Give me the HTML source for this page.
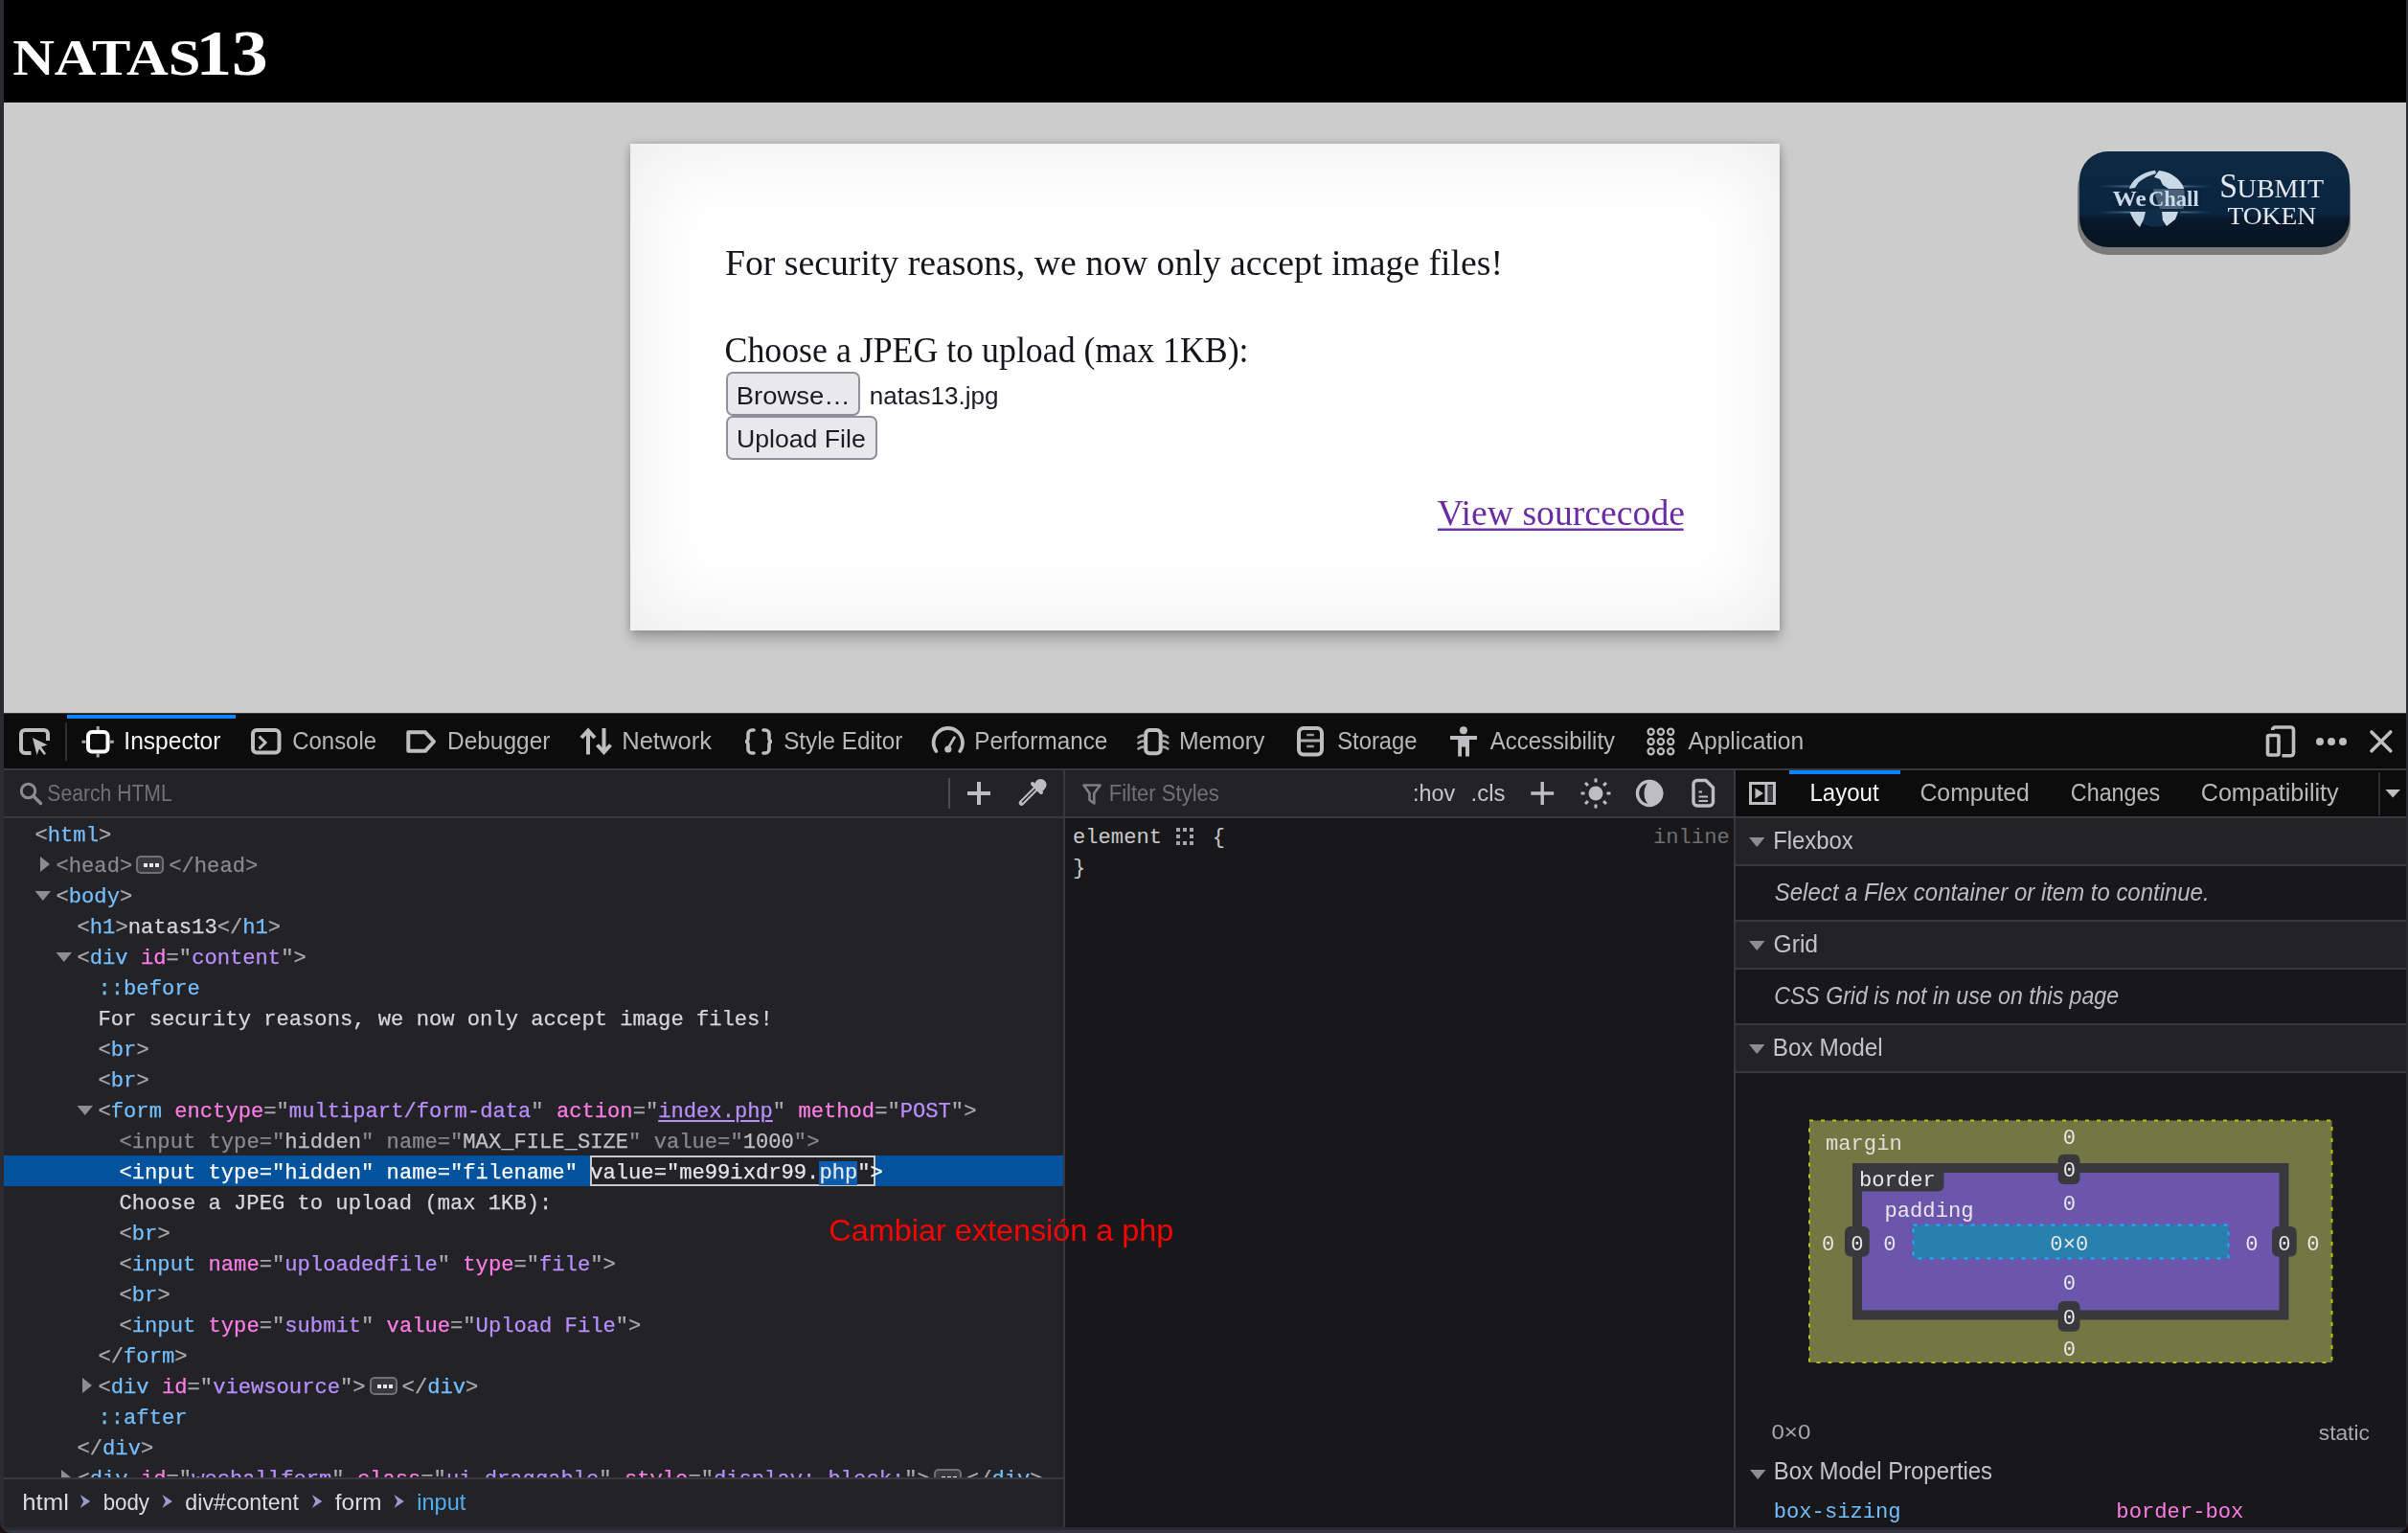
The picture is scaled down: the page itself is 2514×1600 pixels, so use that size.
<!DOCTYPE html>
<html><head><meta charset="utf-8"><style>
*{margin:0;padding:0;box-sizing:border-box}
html,body{width:2514px;height:1600px;overflow:hidden;background:#2b2c32}
body{position:relative;font-family:"Liberation Sans",sans-serif}
.a{position:absolute}
.mono{font-family:"Liberation Mono",monospace;white-space:pre}
.ln{background:#38383d}
.row{left:4px;height:32px;width:1106px;font-size:22.15px;line-height:32px;color:#d7d7db}
.b{color:#a9a9ac}.t{color:#75bfff}.n{color:#ff7de9}.v{color:#b98eff}.x{color:#d7d7db}
.dim .b,.dim .t,.dim .n{color:#8a8a8d}.dim .v,.dim .x{color:#c0c0c2}
.dimall span{color:#8a8a8d}
.sel{background:#00539c}
.sel span{color:#fff}
.bdg{display:inline-block;width:29px;height:19px;border:2px solid #707075;border-radius:5px;vertical-align:-2px;margin:0 5px 0 4px;background:#38383d;position:relative}.bdg:after{content:'';position:absolute;left:6px;top:5.5px;width:4px;height:4px;background:#e8e8ea;box-shadow:6px 0 0 #e8e8ea,12px 0 0 #e8e8ea}
.edit{}
.edit span{color:#e6e6e8}
.hl{background:#0b5cad;color:#fff}
svg text{white-space:pre}
svg,.tree{will-change:transform}
.row{-webkit-text-stroke:0.25px currentColor}
.row span{-webkit-text-stroke:0.25px currentColor}
</style></head><body>
<div class="a" style="left:4px;top:0;width:2508px;height:107px;background:#000"></div>
<div class="a" style="left:4px;top:107px;width:2508px;height:637px;background:#cccccc"></div>
<div class="a" style="left:658px;top:150px;width:1200px;height:508px;background:#fff;box-shadow:inset 0 0 90px rgba(0,0,0,.085), 0 0 8px rgba(0,0,0,.2), 1px 10px 12px rgba(0,0,0,.2)"></div>
<div class="a" style="left:758px;top:388px;width:140px;height:46px;background:#e9e9ed;border:2px solid #8f8f9d;border-radius:7px"></div>
<div class="a" style="left:758px;top:434px;width:158px;height:46px;background:#e9e9ed;border:2px solid #8f8f9d;border-radius:7px"></div>
<div class="a" style="left:2169px;top:165px;width:285px;height:101px;border-radius:32px;background:#7a7a7a"></div>
<div class="a" style="left:2171px;top:158px;width:282px;height:100px;border-radius:30px;background:linear-gradient(#0d2842 0%,#0a2540 66%,#08182a 70%,#071522 100%)"></div>
<div class="a" style="left:4px;top:744px;width:2508px;height:58px;background:#0c0c0d;border-top:1px solid #3a3a40"></div>
<div class="a" style="left:70px;top:746px;width:176px;height:4px;background:#0a84ff"></div>
<div class="a ln" style="left:4px;top:802px;width:2508px;height:2px"></div>
<div class="a" style="left:4px;top:804px;width:1106px;height:48px;background:#232327"></div>
<div class="a ln" style="left:4px;top:852px;width:2508px;height:2px"></div>
<div class="a" style="left:4px;top:854px;width:1106px;height:740px;background:#232327"></div>
<div class="a ln" style="left:4px;top:1542px;width:1106px;height:2px"></div>
<div class="a ln" style="left:1110px;top:804px;width:2px;height:790px"></div>
<div class="a ln" style="left:1810px;top:804px;width:2px;height:790px"></div>
<div class="a" style="left:1112px;top:804px;width:698px;height:48px;background:#232327"></div>
<div class="a" style="left:1112px;top:854px;width:698px;height:740px;background:#18181b"></div>
<div class="a" style="left:1812px;top:804px;width:700px;height:48px;background:#0c0c0d"></div>
<div class="a" style="left:1868px;top:804px;width:116px;height:4px;background:#0a84ff"></div>
<div class="a" style="left:1812px;top:854px;width:700px;height:740px;background:#18181b"></div>
<div class="a" style="left:1812px;top:854px;width:700px;height:48px;background:#232327"></div>
<div class="a ln" style="left:1812px;top:902px;width:700px;height:2px"></div>
<div class="a" style="left:1812px;top:962px;width:700px;height:48px;background:#232327"></div>
<div class="a ln" style="left:1812px;top:1010px;width:700px;height:2px"></div>
<div class="a" style="left:1812px;top:1070px;width:700px;height:48px;background:#232327"></div>
<div class="a ln" style="left:1812px;top:1118px;width:700px;height:2px"></div>
<div class="a ln" style="left:1812px;top:960px;width:700px;height:2px"></div>
<div class="a ln" style="left:1812px;top:1068px;width:700px;height:2px"></div>
<div class="a" style="left:0;top:1594px;width:2514px;height:3px;background:#252a36"></div>
<div class="a" style="left:0;top:1597px;width:2514px;height:3px;background:#34363f"></div>
<div class="a tree" style="left:0;top:0;width:1110px;height:1542px;overflow:hidden"><div class="a row mono " style="top:854px"><div class="a" style="left:32.5px;top:3px"><span class="b">&lt;</span><span class="t">html</span><span class="b">&gt;</span></div></div>
<div class="a row mono dimall" style="top:886px"><div class="a" style="left:54.5px;top:3px"><span class="b">&lt;</span><span class="t">head</span><span class="b">&gt;</span><span class="bdg"></span><span class="b">&lt;/</span><span class="t">head</span><span class="b">&gt;</span></div></div>
<div class="a row mono " style="top:918px"><div class="a" style="left:54.5px;top:3px"><span class="b">&lt;</span><span class="t">body</span><span class="b">&gt;</span></div></div>
<div class="a row mono " style="top:950px"><div class="a" style="left:76.5px;top:3px"><span class="b">&lt;</span><span class="t">h1</span><span class="b">&gt;</span><span class="x">natas13</span><span class="b">&lt;/</span><span class="t">h1</span><span class="b">&gt;</span></div></div>
<div class="a row mono " style="top:982px"><div class="a" style="left:76.5px;top:3px"><span class="b">&lt;</span><span class="t">div</span><span class="x"> </span><span class="n">id</span><span class="b">="</span><span class="v">content</span><span class="b">"</span><span class="b">&gt;</span></div></div>
<div class="a row mono " style="top:1014px"><div class="a" style="left:98.5px;top:3px"><span class="t">::before</span></div></div>
<div class="a row mono " style="top:1046px"><div class="a" style="left:98.5px;top:3px"><span class="x">For security reasons, we now only accept image files!</span></div></div>
<div class="a row mono " style="top:1078px"><div class="a" style="left:98.5px;top:3px"><span class="b">&lt;</span><span class="t">br</span><span class="b">&gt;</span></div></div>
<div class="a row mono " style="top:1110px"><div class="a" style="left:98.5px;top:3px"><span class="b">&lt;</span><span class="t">br</span><span class="b">&gt;</span></div></div>
<div class="a row mono " style="top:1142px"><div class="a" style="left:98.5px;top:3px"><span class="b">&lt;</span><span class="t">form</span><span class="x"> </span><span class="n">enctype</span><span class="b">="</span><span class="v">multipart/form-data</span><span class="b">"</span><span class="x"> </span><span class="n">action</span><span class="b">="</span><span class="v" style="text-decoration:underline;text-underline-offset:3px;text-decoration-thickness:2px">index.php</span><span class="b">"</span><span class="x"> </span><span class="n">method</span><span class="b">="</span><span class="v">POST</span><span class="b">"</span><span class="b">&gt;</span></div></div>
<div class="a row mono dim" style="top:1174px"><div class="a" style="left:120.5px;top:3px"><span class="b">&lt;</span><span class="t">input</span><span class="x"> </span><span class="n">type</span><span class="b">="</span><span class="v">hidden</span><span class="b">"</span><span class="x"> </span><span class="n">name</span><span class="b">="</span><span class="v">MAX_FILE_SIZE</span><span class="b">"</span><span class="x"> </span><span class="n">value</span><span class="b">="</span><span class="v">1000</span><span class="b">"</span><span class="b">&gt;</span></div></div>
<div class="a row mono sel" style="top:1206px"><div class="a" style="left:612px;top:0;width:298px;height:32px;background:#232327;border:2px solid #c8c8cc"></div><div class="a" style="left:120.5px;top:3px"><span class="b">&lt;</span><span class="t">input</span><span class="x"> </span><span class="n">type</span><span class="b">="</span><span class="v">hidden</span><span class="b">"</span><span class="x"> </span><span class="n">name</span><span class="b">="</span><span class="v">filename</span><span class="b">"</span><span class="x"> </span><span class="edit"><span class="x">value="me99ixdr99.</span><span class="hl">php</span><span class="x">"</span></span><span class="b">&gt;</span></div></div>
<div class="a row mono " style="top:1238px"><div class="a" style="left:120.5px;top:3px"><span class="x">Choose a JPEG to upload (max 1KB):</span></div></div>
<div class="a row mono " style="top:1270px"><div class="a" style="left:120.5px;top:3px"><span class="b">&lt;</span><span class="t">br</span><span class="b">&gt;</span></div></div>
<div class="a row mono " style="top:1302px"><div class="a" style="left:120.5px;top:3px"><span class="b">&lt;</span><span class="t">input</span><span class="x"> </span><span class="n">name</span><span class="b">="</span><span class="v">uploadedfile</span><span class="b">"</span><span class="x"> </span><span class="n">type</span><span class="b">="</span><span class="v">file</span><span class="b">"</span><span class="b">&gt;</span></div></div>
<div class="a row mono " style="top:1334px"><div class="a" style="left:120.5px;top:3px"><span class="b">&lt;</span><span class="t">br</span><span class="b">&gt;</span></div></div>
<div class="a row mono " style="top:1366px"><div class="a" style="left:120.5px;top:3px"><span class="b">&lt;</span><span class="t">input</span><span class="x"> </span><span class="n">type</span><span class="b">="</span><span class="v">submit</span><span class="b">"</span><span class="x"> </span><span class="n">value</span><span class="b">="</span><span class="v">Upload File</span><span class="b">"</span><span class="b">&gt;</span></div></div>
<div class="a row mono " style="top:1398px"><div class="a" style="left:98.5px;top:3px"><span class="b">&lt;/</span><span class="t">form</span><span class="b">&gt;</span></div></div>
<div class="a row mono " style="top:1430px"><div class="a" style="left:98.5px;top:3px"><span class="b">&lt;</span><span class="t">div</span><span class="x"> </span><span class="n">id</span><span class="b">="</span><span class="v">viewsource</span><span class="b">"</span><span class="b">&gt;</span><span class="bdg"></span><span class="b">&lt;/</span><span class="t">div</span><span class="b">&gt;</span></div></div>
<div class="a row mono " style="top:1462px"><div class="a" style="left:98.5px;top:3px"><span class="t">::after</span></div></div>
<div class="a row mono " style="top:1494px"><div class="a" style="left:76.5px;top:3px"><span class="b">&lt;/</span><span class="t">div</span><span class="b">&gt;</span></div></div>
<div class="a row mono " style="top:1526px"><div class="a" style="left:76.5px;top:3px"><span class="b">&lt;</span><span class="t">div</span><span class="x"> </span><span class="n">id</span><span class="b">="</span><span class="v">wechallform</span><span class="b">"</span><span class="x"> </span><span class="n">class</span><span class="b">="</span><span class="v">ui-draggable</span><span class="b">"</span><span class="x"> </span><span class="n">style</span><span class="b">="</span><span class="v">display: block;</span><span class="b">"</span><span class="b">&gt;</span><span class="bdg"></span><span class="b">&lt;/</span><span class="t">div</span><span class="b">&gt;</span></div></div></div>
<div class="a mono" style="left:1120px;top:859px;font-size:22.15px;line-height:32px;color:#c9c9cc">element <span style="display:inline-block;width:13px"></span>  {</div>
<div class="a mono" style="left:1120px;top:891px;font-size:22.15px;line-height:32px;color:#c9c9cc">}</div>
<div class="a mono" style="left:1726px;top:859px;font-size:22.15px;line-height:32px;color:#6f6f73">inline</div>
<svg class="a" style="left:0;top:0" width="2514" height="1600" viewBox="0 0 2514 1600"><defs><clipPath id="treeclip"><rect x="0" y="854" width="1110" height="688"/></clipPath></defs><path d="M42.0 894 v16 l10 -8 z" fill="#8d8d90" clip-path="url(#treeclip)"/><path d="M36.5 930 h16.5 l-8.25 10 z" fill="#8d8d90" clip-path="url(#treeclip)"/><path d="M58.5 994 h16.5 l-8.25 10 z" fill="#8d8d90" clip-path="url(#treeclip)"/><path d="M80.5 1154 h16.5 l-8.25 10 z" fill="#8d8d90" clip-path="url(#treeclip)"/><path d="M86.0 1438 v16 l10 -8 z" fill="#8d8d90" clip-path="url(#treeclip)"/><path d="M64.0 1534 v16 l10 -8 z" fill="#8d8d90" clip-path="url(#treeclip)"/><rect x="1228.0" y="864.0" width="4" height="4" fill="#a5a5a8"/><rect x="1235.0" y="864.0" width="4" height="4" fill="#a5a5a8"/><rect x="1242.0" y="864.0" width="4" height="4" fill="#a5a5a8"/><rect x="1228.0" y="871.0" width="4" height="4" fill="#a5a5a8"/><rect x="1242.0" y="871.0" width="4" height="4" fill="#a5a5a8"/><rect x="1228.0" y="878.0" width="4" height="4" fill="#a5a5a8"/><rect x="1235.0" y="878.0" width="4" height="4" fill="#a5a5a8"/><rect x="1242.0" y="878.0" width="4" height="4" fill="#a5a5a8"/><rect x="1889" y="1169.5" width="545.5" height="252.5" fill="#737744" stroke="#b8c400" stroke-width="2" stroke-dasharray="4 8"/><rect x="1939" y="1219" width="445.5" height="153.5" fill="#6b56ac" stroke="#38383d" stroke-width="10"/><path d="M1934 1214 H2029.5 V1237.5 a6 6 0 0 1 -6 6 H1934 Z" fill="#38383d"/><rect x="1997.5" y="1278.5" width="329" height="35" fill="#2880ac" stroke="#1aaeff" stroke-width="2" stroke-dasharray="4 8"/><rect x="2148.6" y="1204.8" width="22.9" height="31.2" rx="6" fill="#38383d"/><rect x="1926" y="1280" width="25.7" height="31.5" rx="6" fill="#38383d"/><rect x="2372" y="1280" width="25.7" height="31.5" rx="6" fill="#38383d"/><rect x="2148.6" y="1358" width="22.9" height="31.7" rx="6" fill="#38383d"/><path d="M32.5 786 H26 a4 4 0 0 1 -4 -4 V766 a4 4 0 0 1 4 -4 H46 a4 4 0 0 1 4 4 V773" fill="none" stroke="#bebec0" stroke-width="4"/><path d="M34 770 L49.5 777.5 L43 779.5 L48 786.5 L46 788 L41 781.5 L38.5 788 Z" fill="#bebec0"/><rect x="68" y="754" width="2" height="40" fill="#2e2e32"/><rect x="92" y="764" width="20.5" height="20.5" rx="4" fill="none" stroke="#fbfbfe" stroke-width="4"/><path d="M102.2 758 V762 M102.2 786.5 V790.5 M85.5 774.2 H89.5 M114.8 774.2 H118.8" stroke="#a9a9ad" stroke-width="3"/><rect x="264" y="762" width="27.5" height="23.5" rx="4" fill="none" stroke="#bebec0" stroke-width="4"/><path d="M270.5 768.5 L277 775 L270.5 781.5" fill="none" stroke="#bebec0" stroke-width="3"/><path d="M426.3 764.3 H444 L453 774 L444 783.8 H426.3 Z" fill="none" stroke="#bebec0" stroke-width="4" stroke-linejoin="round"/><path d="M614 787.5 V763 M607 770 L614 762.5 L621 770" fill="none" stroke="#bebec0" stroke-width="4"/><path d="M630.5 760 V784.5 M623.5 777.5 L630.5 785 L637.5 777.5" fill="none" stroke="#bebec0" stroke-width="4"/><path d="M787 762 h-2 a4 4 0 0 0 -4 4 v5 a3 3 0 0 1 -3 3 a3 3 0 0 1 3 3 v5 a4 4 0 0 0 4 4 h2" fill="none" stroke="#bebec0" stroke-width="3.6" stroke-linecap="round"/><path d="M797 762 h2 a4 4 0 0 1 4 4 v5 a3 3 0 0 0 3 3 a3 3 0 0 0 -3 3 v5 a4 4 0 0 1 -4 4 h-2" fill="none" stroke="#bebec0" stroke-width="3.6" stroke-linecap="round"/><path d="M977.4 784 A15.2 15.2 0 1 1 1002.2 784" fill="none" stroke="#bebec0" stroke-width="3.8" stroke-linecap="round"/><path d="M989.8 781 L996.5 769.5" stroke="#bebec0" stroke-width="2.6" stroke-linecap="round"/><circle cx="989.8" cy="782" r="3.6" fill="#bebec0"/><rect x="1196.2" y="762" width="15.5" height="24.2" rx="4" fill="none" stroke="#bebec0" stroke-width="4"/><path d="M1188.5 769.5 q2.5 -2 5.5 -2 M1188.5 775.5 q2.5 -2 5.5 -2 M1188.5 781.5 q2.5 -2 5.5 -2 M1219.3 769.5 q-2.5 -2 -5.5 -2 M1219.3 775.5 q-2.5 -2 -5.5 -2 M1219.3 781.5 q-2.5 -2 -5.5 -2" fill="none" stroke="#a8a8aa" stroke-width="2.6" stroke-linecap="round"/><rect x="1356" y="760" width="24" height="27.6" rx="5" fill="none" stroke="#bebec0" stroke-width="4"/><path d="M1358 773 H1378" stroke="#a8a8aa" stroke-width="3"/><path d="M1364.2 767 H1371.8 M1364.2 779 H1371.8" stroke="#9a9a9c" stroke-width="2.6"/><circle cx="1527.9" cy="762.2" r="4" fill="#bebec0"/><path d="M1514 768 H1542 V772 H1534 V789.6 H1530 V779.5 H1526 V789.6 H1522.2 V772 H1514 Z" fill="#bebec0"/><circle cx="1723.6" cy="763.8" r="3.1" fill="none" stroke="#bebec0" stroke-width="2.2"/><circle cx="1723.6" cy="774.0" r="3.1" fill="none" stroke="#bebec0" stroke-width="2.2"/><circle cx="1723.6" cy="784.2" r="3.1" fill="none" stroke="#bebec0" stroke-width="2.2"/><circle cx="1733.9" cy="763.8" r="3.1" fill="none" stroke="#bebec0" stroke-width="2.2"/><circle cx="1733.9" cy="774.0" r="3.1" fill="none" stroke="#bebec0" stroke-width="2.2"/><circle cx="1733.9" cy="784.2" r="3.1" fill="none" stroke="#bebec0" stroke-width="2.2"/><circle cx="1744.2" cy="763.8" r="3.1" fill="none" stroke="#bebec0" stroke-width="2.2"/><circle cx="1744.2" cy="774.0" r="3.1" fill="none" stroke="#bebec0" stroke-width="2.2"/><circle cx="1744.2" cy="784.2" r="3.1" fill="none" stroke="#bebec0" stroke-width="2.2"/><path d="M2372.6 762 a3 3 0 0 1 3 -3 H2391.5 a3 3 0 0 1 3 3 V785.8 a3 3 0 0 1 -3 3 H2382.5" fill="none" stroke="#bebec0" stroke-width="3.6"/><rect x="2367.5" y="767.5" width="11.5" height="20.5" rx="1.5" fill="none" stroke="#bebec0" stroke-width="3.6"/><circle cx="2422" cy="774" r="4" fill="#bebec0"/><circle cx="2434" cy="774" r="4" fill="#bebec0"/><circle cx="2446" cy="774" r="4" fill="#bebec0"/><path d="M2476 764 L2495.8 783.8 M2495.8 764 L2476 783.8" stroke="#bebec0" stroke-width="3.6" stroke-linecap="round"/><circle cx="29.5" cy="825.5" r="7.2" fill="none" stroke="#8d8d90" stroke-width="3"/><path d="M35 831 L42.5 838.5" stroke="#8d8d90" stroke-width="3.4" stroke-linecap="round"/><rect x="990" y="812" width="2" height="32" fill="#4a4a4f"/><path d="M1022 816 V840 M1010 828 H1034" stroke="#bebec0" stroke-width="4"/><path d="M1066.5 838 L1082 822.5" stroke="#bebec0" stroke-width="5.5" stroke-linecap="round"/><path d="M1067 837.5 L1081.5 823" stroke="#232327" stroke-width="1.6"/><path d="M1078 818 L1087 827 M1083.5 822 a4 4 0 0 1 5.8 -5.8 a4 4 0 0 1 0 5.8 l-3 3" stroke="#bebec0" stroke-width="4" fill="#bebec0" stroke-linecap="round"/><path d="M1131.5 819.5 H1148.5 L1142.3 828 V838.5 L1137.5 835 V828 Z" fill="none" stroke="#7e7e82" stroke-width="2.6" stroke-linejoin="round"/><path d="M1610.2 816 V840 M1598.3 828 H1622.2" stroke="#bebec0" stroke-width="3.4"/><circle cx="1666" cy="828" r="7.5" fill="#bebec0"/><path d="M1677.5 828.0 L1681.5 828.0" stroke="#bebec0" stroke-width="3"/><path d="M1674.1 836.1 L1677.0 839.0" stroke="#bebec0" stroke-width="3"/><path d="M1666.0 839.5 L1666.0 843.5" stroke="#bebec0" stroke-width="3"/><path d="M1657.9 836.1 L1655.0 839.0" stroke="#bebec0" stroke-width="3"/><path d="M1654.5 828.0 L1650.5 828.0" stroke="#bebec0" stroke-width="3"/><path d="M1657.9 819.9 L1655.0 817.0" stroke="#bebec0" stroke-width="3"/><path d="M1666.0 816.5 L1666.0 812.5" stroke="#bebec0" stroke-width="3"/><path d="M1674.1 819.9 L1677.0 817.0" stroke="#bebec0" stroke-width="3"/><circle cx="1722" cy="828" r="12.5" fill="none" stroke="#bebec0" stroke-width="3.4"/><path d="M1724 815.5 A12.5 12.5 0 0 1 1724 840.5 A7.5 12.5 0 0 1 1724 815.5 Z" fill="#bebec0"/><path d="M1772 814.5 H1781 L1788.5 822 V837 a4 4 0 0 1 -4 4 H1772 a4 4 0 0 1 -4 -4 V818.5 a4 4 0 0 1 4 -4 Z" fill="none" stroke="#bebec0" stroke-width="3.4" stroke-linejoin="round"/><path d="M1773.5 826.5 H1777 M1773.5 831.5 H1783 M1773.5 836 H1783" stroke="#bebec0" stroke-width="2.2"/><rect x="1827.5" y="817.5" width="25" height="21" fill="none" stroke="#bebec0" stroke-width="3"/><path d="M1844 817.5 V838.5" stroke="#bebec0" stroke-width="3"/><rect x="1846" y="820" width="5" height="16" fill="#3c3c40"/><path d="M1832.5 822.5 L1841 828 L1832.5 833.5 Z" fill="#bebec0"/><rect x="2483" y="806" width="2" height="45" fill="#2e2e32"/><path d="M2490.5 824 H2506 L2498.2 832.6 Z" fill="#bebec0"/><path d="M1826 874 h16.5 l-8.25 10 z" fill="#8d8d90"/><path d="M1826 982 h16.5 l-8.25 10 z" fill="#8d8d90"/><path d="M1826 1090 h16.5 l-8.25 10 z" fill="#8d8d90"/><path d="M1827 1534 h16.5 l-8.25 10 z" fill="#8d8d90"/><path d="M83.7 1560 L94.2 1567 L83.7 1574 L87.2 1567 Z" fill="#9b9bd0"/><path d="M169.4 1560 L179.9 1567 L169.4 1574 L172.9 1567 Z" fill="#9b9bd0"/><path d="M325.8 1560 L336.3 1567 L325.8 1574 L329.3 1567 Z" fill="#9b9bd0"/><path d="M411.4 1560 L421.9 1567 L411.4 1574 L414.9 1567 Z" fill="#9b9bd0"/><rect x="1501" y="551.5" width="256.7" height="2.4" fill="#6a2ca5"/><text x="1906" y="1199.8" font-size="22.15" font-family='"Liberation Mono",monospace' fill="#e0e0d8">margin</text><text x="1941" y="1237.7" font-size="22.15" font-family='"Liberation Mono",monospace' fill="#e8e8ea">border</text><text x="1967.5" y="1270.1" font-size="22.15" font-family='"Liberation Mono",monospace' fill="#e8e8ea">padding</text><text x="2153.65" y="1194.10" font-size="22.15" font-family='"Liberation Mono",monospace' fill="#e8e8ea">0</text><text x="2153.65" y="1228.30" font-size="22.15" font-family='"Liberation Mono",monospace' fill="#e8e8ea">0</text><text x="2153.65" y="1262.70" font-size="22.15" font-family='"Liberation Mono",monospace' fill="#e8e8ea">0</text><text x="1901.95" y="1304.50" font-size="22.15" font-family='"Liberation Mono",monospace' fill="#e8e8ea">0</text><text x="1932.25" y="1304.50" font-size="22.15" font-family='"Liberation Mono",monospace' fill="#e8e8ea">0</text><text x="1966.25" y="1304.50" font-size="22.15" font-family='"Liberation Mono",monospace' fill="#e8e8ea">0</text><text x="2344.25" y="1304.50" font-size="22.15" font-family='"Liberation Mono",monospace' fill="#e8e8ea">0</text><text x="2378.25" y="1304.50" font-size="22.15" font-family='"Liberation Mono",monospace' fill="#e8e8ea">0</text><text x="2408.35" y="1304.50" font-size="22.15" font-family='"Liberation Mono",monospace' fill="#e8e8ea">0</text><text x="2153.65" y="1346.10" font-size="22.15" font-family='"Liberation Mono",monospace' fill="#e8e8ea">0</text><text x="2153.65" y="1382.30" font-size="22.15" font-family='"Liberation Mono",monospace' fill="#e8e8ea">0</text><text x="2153.65" y="1414.70" font-size="22.15" font-family='"Liberation Mono",monospace' fill="#e8e8ea">0</text><text x="2140.36" y="1304.50" font-size="22.15" font-family='"Liberation Mono",monospace' fill="#e8e8ea">0×0</text><defs><linearGradient id="wst" x1="0" x2="1"><stop offset="0" stop-color="#4a6a88" stop-opacity="0"/><stop offset=".25" stop-color="#5a7c9c" stop-opacity=".7"/><stop offset=".75" stop-color="#5a7c9c" stop-opacity=".7"/><stop offset="1" stop-color="#4a6a88" stop-opacity="0"/></linearGradient></defs><rect x="2190" y="193.5" width="120" height="2" fill="url(#wst)"/><rect x="2190" y="220.5" width="120" height="2" fill="url(#wst)"/><circle cx="2251" cy="207.4" r="29.3" fill="#0f2c48"/><path d="M2223 197 C2226 187 2236 180 2250 177.8 L2251 181 C2244 183 2238 186 2233 190 L2229 196 Z" fill="#c3d3e2"/><path d="M2254 178 C2266 179 2277 187 2280.3 197 L2264 197 L2258 193 L2255 187 L2249 185 Z" fill="#cad9e6"/><path d="M2248 197.5 L2280.3 197.5 C2281 204 2281 212 2279.5 218 L2255 218 Z" fill="#7f97ad"/><path d="M2223.5 221 L2240 221 L2238 229 L2234 237 C2229 233 2226 227 2223.5 221 Z" fill="#c3d3e2"/><path d="M2257 221 L2274 221 L2271 229 L2262 236 L2258 230 Z" fill="#cad9e6"/><rect x="2204.8" y="197.4" width="93" height="21" fill="#0a2036" opacity=".45"/><path d="M0 1588 A12 12 0 0 0 12 1600 H0 Z" fill="#1c1212"/><path d="M2514 1588 A12 12 0 0 1 2502 1600 H2514 Z" fill="#160a0a"/><text x="756.91" y="286.80" font-size="37.50" textLength="812.17" lengthAdjust="spacingAndGlyphs" font-family='"Liberation Serif",serif' font-style="normal" font-weight="normal" fill="#15141a" >For security reasons, we now only accept image files!</text><text x="756.53" y="378.00" font-size="37.50" textLength="547.05" lengthAdjust="spacingAndGlyphs" font-family='"Liberation Serif",serif' font-style="normal" font-weight="normal" fill="#15141a" >Choose a JPEG to upload (max 1KB):</text><text x="1500.59" y="548.00" font-size="37.50" textLength="258.42" lengthAdjust="spacingAndGlyphs" font-family='"Liberation Serif",serif' font-style="normal" font-weight="normal" fill="#6a2ca5" >View sourcecode</text><text x="768.75" y="421.70" font-size="26.00" textLength="118.97" lengthAdjust="spacingAndGlyphs" font-family='"Liberation Sans",sans-serif' font-style="normal" font-weight="normal" fill="#1c1b22" >Browse…</text><text x="907.78" y="421.70" font-size="26.00" textLength="134.68" lengthAdjust="spacingAndGlyphs" font-family='"Liberation Sans",sans-serif' font-style="normal" font-weight="normal" fill="#1c1b22" >natas13.jpg</text><text x="768.95" y="467.00" font-size="26.00" textLength="134.83" lengthAdjust="spacingAndGlyphs" font-family='"Liberation Sans",sans-serif' font-style="normal" font-weight="normal" fill="#1c1b22" >Upload File</text><text x="13.15" y="77.90" font-size="52.00" textLength="196.21" lengthAdjust="spacingAndGlyphs" font-family='"Liberation Serif",serif' font-style="normal" font-weight="bold" fill="#fff" >NATAS</text><text x="204.48" y="77.90" font-size="67.00" textLength="75.28" lengthAdjust="spacingAndGlyphs" font-family='"Liberation Serif",serif' font-style="normal" font-weight="bold" fill="#fff" >13</text><text x="129.34" y="782.00" font-size="26.00" textLength="100.98" lengthAdjust="spacingAndGlyphs" font-family='"Liberation Sans",sans-serif' font-style="normal" font-weight="normal" fill="#f5f5f7" >Inspector</text><text x="305.28" y="782.00" font-size="26.00" textLength="87.77" lengthAdjust="spacingAndGlyphs" font-family='"Liberation Sans",sans-serif' font-style="normal" font-weight="normal" fill="#b8b8bb" >Console</text><text x="466.99" y="782.00" font-size="26.00" textLength="107.42" lengthAdjust="spacingAndGlyphs" font-family='"Liberation Sans",sans-serif' font-style="normal" font-weight="normal" fill="#b8b8bb" >Debugger</text><text x="649.20" y="782.00" font-size="26.00" textLength="93.76" lengthAdjust="spacingAndGlyphs" font-family='"Liberation Sans",sans-serif' font-style="normal" font-weight="normal" fill="#b8b8bb" >Network</text><text x="818.18" y="782.00" font-size="26.00" textLength="124.04" lengthAdjust="spacingAndGlyphs" font-family='"Liberation Sans",sans-serif' font-style="normal" font-weight="normal" fill="#b8b8bb" >Style Editor</text><text x="1017.31" y="782.00" font-size="26.00" textLength="139.05" lengthAdjust="spacingAndGlyphs" font-family='"Liberation Sans",sans-serif' font-style="normal" font-weight="normal" fill="#b8b8bb" >Performance</text><text x="1230.97" y="782.00" font-size="26.00" textLength="89.39" lengthAdjust="spacingAndGlyphs" font-family='"Liberation Sans",sans-serif' font-style="normal" font-weight="normal" fill="#b8b8bb" >Memory</text><text x="1396.21" y="782.00" font-size="26.00" textLength="83.35" lengthAdjust="spacingAndGlyphs" font-family='"Liberation Sans",sans-serif' font-style="normal" font-weight="normal" fill="#b8b8bb" >Storage</text><text x="1555.75" y="782.00" font-size="26.00" textLength="130.29" lengthAdjust="spacingAndGlyphs" font-family='"Liberation Sans",sans-serif' font-style="normal" font-weight="normal" fill="#b8b8bb" >Accessibility</text><text x="1762.45" y="782.00" font-size="26.00" textLength="120.76" lengthAdjust="spacingAndGlyphs" font-family='"Liberation Sans",sans-serif' font-style="normal" font-weight="normal" fill="#b8b8bb" >Application</text><text x="49.33" y="836.00" font-size="23.30" textLength="130.38" lengthAdjust="spacingAndGlyphs" font-family='"Liberation Sans",sans-serif' font-style="normal" font-weight="normal" fill="#717175" >Search HTML</text><text x="1157.69" y="835.70" font-size="23.30" textLength="115.21" lengthAdjust="spacingAndGlyphs" font-family='"Liberation Sans",sans-serif' font-style="normal" font-weight="normal" fill="#717175" >Filter Styles</text><text x="1475.08" y="835.60" font-size="23.50" textLength="44.02" lengthAdjust="spacingAndGlyphs" font-family='"Liberation Sans",sans-serif' font-style="normal" font-weight="normal" fill="#c6c6c8" >:hov</text><text x="1535.52" y="835.60" font-size="23.50" textLength="35.94" lengthAdjust="spacingAndGlyphs" font-family='"Liberation Sans",sans-serif' font-style="normal" font-weight="normal" fill="#c6c6c8" >.cls</text><text x="1889.43" y="836.20" font-size="26.00" textLength="72.23" lengthAdjust="spacingAndGlyphs" font-family='"Liberation Sans",sans-serif' font-style="normal" font-weight="normal" fill="#f5f5f7" >Layout</text><text x="2004.43" y="836.20" font-size="26.00" textLength="114.45" lengthAdjust="spacingAndGlyphs" font-family='"Liberation Sans",sans-serif' font-style="normal" font-weight="normal" fill="#b8b8bb" >Computed</text><text x="2161.81" y="836.20" font-size="26.00" textLength="93.43" lengthAdjust="spacingAndGlyphs" font-family='"Liberation Sans",sans-serif' font-style="normal" font-weight="normal" fill="#b8b8bb" >Changes</text><text x="2297.72" y="836.20" font-size="26.00" textLength="143.94" lengthAdjust="spacingAndGlyphs" font-family='"Liberation Sans",sans-serif' font-style="normal" font-weight="normal" fill="#b8b8bb" >Compatibility</text><text x="1851.14" y="886.00" font-size="26.00" textLength="83.63" lengthAdjust="spacingAndGlyphs" font-family='"Liberation Sans",sans-serif' font-style="normal" font-weight="normal" fill="#c4c4c6" >Flexbox</text><text x="1851.47" y="994.00" font-size="26.00" textLength="46.62" lengthAdjust="spacingAndGlyphs" font-family='"Liberation Sans",sans-serif' font-style="normal" font-weight="normal" fill="#c4c4c6" >Grid</text><text x="1850.71" y="1102.10" font-size="26.00" textLength="114.94" lengthAdjust="spacingAndGlyphs" font-family='"Liberation Sans",sans-serif' font-style="normal" font-weight="normal" fill="#c4c4c6" >Box Model</text><text x="1852.83" y="940.00" font-size="25.00" textLength="453.72" lengthAdjust="spacingAndGlyphs" font-family='"Liberation Sans",sans-serif' font-style="italic" font-weight="normal" fill="#bdbdc0" >Select a Flex container or item to continue.</text><text x="1852.23" y="1048.00" font-size="25.00" textLength="359.83" lengthAdjust="spacingAndGlyphs" font-family='"Liberation Sans",sans-serif' font-style="italic" font-weight="normal" fill="#bdbdc0" >CSS Grid is not in use on this page</text><text x="1849.46" y="1501.80" font-size="22.50" textLength="40.89" lengthAdjust="spacingAndGlyphs" font-family='"Liberation Sans",sans-serif' font-style="normal" font-weight="normal" fill="#a8a8ab" >0×0</text><text x="2420.76" y="1502.50" font-size="22.50" textLength="53.13" lengthAdjust="spacingAndGlyphs" font-family='"Liberation Sans",sans-serif' font-style="normal" font-weight="normal" fill="#a8a8ab" >static</text><text x="1851.74" y="1543.80" font-size="26.00" textLength="228.32" lengthAdjust="spacingAndGlyphs" font-family='"Liberation Sans",sans-serif' font-style="normal" font-weight="normal" fill="#c4c4c6" >Box Model Properties</text><text x="1851.77" y="1584.10" font-size="22.15" textLength="132.81" lengthAdjust="spacingAndGlyphs" font-family='"Liberation Mono",monospace' font-style="normal" font-weight="normal" fill="#75bfff" >box-sizing</text><text x="2209.37" y="1584.20" font-size="22.15" textLength="133.07" lengthAdjust="spacingAndGlyphs" font-family='"Liberation Mono",monospace' font-style="normal" font-weight="normal" fill="#ff7de9" >border-box</text><text x="23.27" y="1575.90" font-size="24.50" textLength="48.66" lengthAdjust="spacingAndGlyphs" font-family='"Liberation Sans",sans-serif' font-style="normal" font-weight="normal" fill="#dcdcde" >html</text><text x="107.65" y="1575.90" font-size="24.50" textLength="48.30" lengthAdjust="spacingAndGlyphs" font-family='"Liberation Sans",sans-serif' font-style="normal" font-weight="normal" fill="#dcdcde" >body</text><text x="193.33" y="1575.90" font-size="24.50" textLength="118.63" lengthAdjust="spacingAndGlyphs" font-family='"Liberation Sans",sans-serif' font-style="normal" font-weight="normal" fill="#dcdcde" >div#content</text><text x="349.86" y="1575.90" font-size="24.50" textLength="48.65" lengthAdjust="spacingAndGlyphs" font-family='"Liberation Sans",sans-serif' font-style="normal" font-weight="normal" fill="#dcdcde" >form</text><text x="435.32" y="1575.90" font-size="24.50" textLength="51.03" lengthAdjust="spacingAndGlyphs" font-family='"Liberation Sans",sans-serif' font-style="normal" font-weight="normal" fill="#4fb0f0" >input</text><text x="2205.45" y="215.00" font-size="23.00" textLength="35.21" lengthAdjust="spacingAndGlyphs" font-family='"Liberation Serif",serif' font-style="normal" font-weight="bold" fill="#c8d9ea" >We</text><text x="2242.89" y="215.00" font-size="23.00" textLength="52.79" lengthAdjust="spacingAndGlyphs" font-family='"Liberation Serif",serif' font-style="normal" font-weight="bold" fill="#c8d9ea" >Chall</text><text x="2317.14" y="205.80" font-size="35.50" textLength="18.76" lengthAdjust="spacingAndGlyphs" font-family='"Liberation Serif",serif' font-style="normal" font-weight="normal" fill="#e3e8ee" >S</text><text x="2335.61" y="205.80" font-size="27.20" textLength="90.47" lengthAdjust="spacingAndGlyphs" font-family='"Liberation Serif",serif' font-style="normal" font-weight="normal" fill="#e3e8ee" >UBMIT</text><text x="2325.40" y="233.60" font-size="26.20" textLength="92.73" lengthAdjust="spacingAndGlyphs" font-family='"Liberation Serif",serif' font-style="normal" font-weight="normal" fill="#e3e8ee" >TOKEN</text><text x="865.35" y="1294.50" font-size="32.00" textLength="360.00" lengthAdjust="spacingAndGlyphs" font-family='"Liberation Sans",sans-serif' font-style="normal" font-weight="normal" fill="#ff0000" >Cambiar extensión a php</text></svg>
</body></html>
